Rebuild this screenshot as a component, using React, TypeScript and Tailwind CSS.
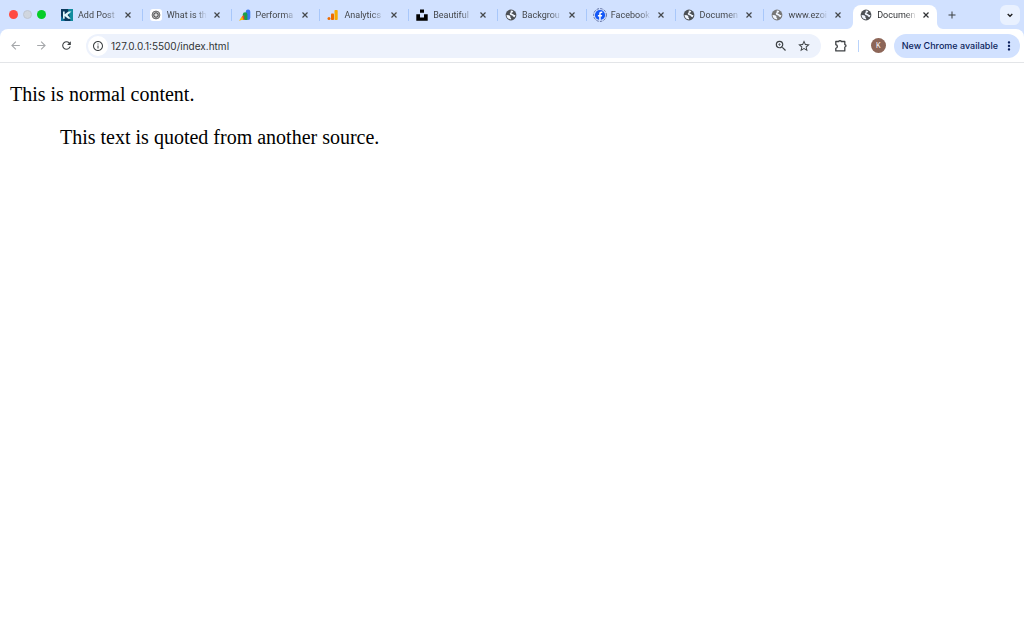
import type { ReactNode } from "react";
import {
  MdArrowBack,
  MdArrowForward,
  MdRefresh,
  MdInfoOutline,
  MdZoomIn,
  MdStarOutline,
  MdAdd,
  MdMoreVert,
} from "react-icons/md";

function Kinsta() {
  return (
    <svg viewBox="0 0 12 12" className="size-3">
      <rect width="12" height="12" fill="#0b3a5e" />
      <path d="M7 0h5v12H9.500z" fill="#128c9e" />
      <path d="M0 7l4 5H0z" fill="#1276a0" />
      <path d="M2 2.500h1.700v2.800L7.500 2.500h3L6.500 6l3.200 3.700H7.200L3.700 6.900V9.700H2z" fill="#dff6fb" />
    </svg>
  );
}

function Knot() {
  return (
    <svg viewBox="0 0 12 12" className="size-3">
      <rect width="12" height="12" rx="3" fill="#fff" />
      <circle cx="6" cy="6" r="3.900" fill="#c4c4c4" stroke="#5a5a5a" strokeWidth="0.900" />
      <path d="M6 3.600l2.100 1.200v2.400L6 8.400 3.900 7.200V4.800z" fill="none" stroke="#4a4a4a" strokeWidth="0.900" />
      <circle cx="6" cy="6" r="0.800" fill="#fff" />
    </svg>
  );
}

function Performance() {
  return (
    <svg viewBox="0 0 12 12" className="size-3">
      <rect x="6.800" y="0.500" width="4.500" height="10.500" rx="2.200" fill="#3b78f0" />
      <path d="M3.800 5.500a2.300 2.300 0 0 1 4.600 0V11H3.800z" fill="#1b9e4b" />
      <path d="M0 11.800L3.500 6.500l2 4.500H2.500z" fill="#fbbc04" />
      <path d="M3.200 7.500l2-1.500V11H4.500z" fill="#ea4335" />
    </svg>
  );
}

function Analytics() {
  return (
    <svg viewBox="0 0 12 12" className="size-3">
      <rect x="7.500" y="1" width="3.200" height="10" rx="0.800" fill="#f9ab00" />
      <rect x="4" y="4.500" width="3" height="6.500" rx="0.800" fill="#ee6c00" />
      <circle cx="2" cy="9.600" r="1.500" fill="#ee6c00" />
    </svg>
  );
}

function Unsplash() {
  return (
    <svg viewBox="0 0 12 12" className="size-3">
      <path d="M4 0.500h4v3.300H4zM0.300 5.300H4V8.500h4V5.300h3.700v6.400H0.300z" fill="#000" />
    </svg>
  );
}

function Facebook() {
  return (
    <svg viewBox="0 0 14 14" className="-m-px size-3.5">
      <circle cx="7" cy="7" r="6.400" fill="none" stroke="#44538a" strokeWidth="0.800" strokeDasharray="2.500 1.200" />
      <circle cx="7" cy="7" r="5.100" fill="#1558f6" />
      <path d="M6.200 12V8.400H4.900V6.900h1.300V5.800c0-1.500.8-2.200 2-2.200h1.100v1.400h-.8c-.6 0-.8.300-.8.900v1h1.500l-.3 1.500H7.700V12z" fill="#fff" />
    </svg>
  );
}

function Globe({ muted = false }: { muted?: boolean }) {
  return (
    <svg viewBox="0 0 12 12" className={muted ? "size-3 text-[#777777]" : "size-3 text-[#4d5156]"}>
      <circle cx="6" cy="6" r="5.400" fill="currentColor" />
      <path
        fill="#f1f6ff"
        d="M5.800 1.600c.9-.1 1.700.1 2.400.5l-.3 1.100-1.300.5.100 1.100 1.500.3.700 1 1.500-.2c-.1.900-.5 1.700-1 2.300L8 7.600l-.6-1.200-1.900-.5-.8-1.300.9-1z"
      />
      <path fill="#f1f6ff" d="M1.600 6l2.600.3 1.300 1.100-.3 1.100.9.500v1.400C3.600 10.400 1.500 8.500 1.600 6z" />
    </svg>
  );
}

function Cross() {
  return (
    <svg viewBox="0 0 8 8" className="size-2" fill="none" stroke="currentColor" strokeWidth="1.200">
      <path d="M1.500 1.500l5 5M6.500 1.500l-5 5" />
    </svg>
  );
}

function Puzzle() {
  return (
    <svg viewBox="0 0 14 14" className="size-3.5" fill="none" stroke="#3f4245" strokeWidth="1.300" strokeLinejoin="round">
      <path d="M1.800 2.500h2.900c.3-1.300 2.300-1.300 2.600 0h3.500v3.100c1.600.2 1.600 2.300 0 2.500v3.800h-9V9.300c2.100-.5 2.100-3.100 0-3.600z" />
    </svg>
  );
}

type TabInfo = { title: string; icon: ReactNode };

const tabs: TabInfo[] = [
  { title: "Add Post", icon: <Kinsta /> },
  { title: "What is th", icon: <Knot /> },
  { title: "Performa", icon: <Performance /> },
  { title: "Analytics", icon: <Analytics /> },
  { title: "Beautiful", icon: <Unsplash /> },
  { title: "Backgrou", icon: <Globe /> },
  { title: "Facebook", icon: <Facebook /> },
  { title: "Documen", icon: <Globe /> },
  { title: "www.ezoi", icon: <Globe muted /> },
  { title: "Documen", icon: <Globe /> },
];

function Flare({ side }: { side: "left" | "right" }) {
  return (
    <svg
      viewBox="0 0 6 6"
      aria-hidden="true"
      className={side === "left" ? "absolute bottom-0 -left-1.5 size-1.5" : "absolute bottom-0 -right-1.5 size-1.5"}
    >
      <path d={side === "left" ? "M6 0v6H0a6 6 0 0 0 6-6z" : "M0 0v6h6a6 6 0 0 1-6-6z"} fill="#fff" />
    </svg>
  );
}

function Tab({ tab, active, divider }: { tab: TabInfo; active: boolean; divider: boolean }) {
  return (
    <li className="flex min-w-0 flex-1 basis-0 items-end">
      <div
        className={
          active
            ? "relative mr-[5px] flex h-6 min-w-0 flex-1 items-center rounded-t-lg bg-white pb-1 pl-[7px] text-[#303235]"
            : "flex h-6 min-w-0 flex-1 items-center pb-1 pl-[7px] text-[#44474b]"
        }
      >
        {active && <Flare side="left" />}
        <button type="button" className="flex min-w-0 flex-1 items-center gap-[5px] text-left">
          <span className="shrink-0">{tab.icon}</span>
          <span className="min-w-0 flex-1 overflow-hidden font-['Roboto','Liberation_Sans',sans-serif] text-[9px] leading-3 whitespace-nowrap [mask-image:linear-gradient(to_right,black_28px,transparent_40px)]">
            {tab.title}
          </span>
        </button>
        <button
          type="button"
          aria-label={`Close ${tab.title}`}
          className={
            active
              ? "mr-[5px] flex size-3 shrink-0 items-center justify-center"
              : "mr-2 ml-0.5 flex size-3 shrink-0 items-center justify-center"
          }
        >
          <Cross />
        </button>
        {!active && <span className={divider ? "h-3 w-px bg-[#a8c7fa]" : "w-px"} />}
        {active && <Flare side="right" />}
      </div>
    </li>
  );
}

export default function App() {
  return (
    <div className="min-h-screen bg-white font-['Inter','Liberation_Sans',sans-serif]">
      <header className="bg-[#d1e1ff]">
        <div className="flex h-[29px] items-end">
          <div className="flex h-[29px] w-[54px] shrink-0 items-center gap-[5px] pl-[9px]">
            <span className="size-[9px] rounded-full bg-[#ff4b42]" />
            <span className="size-[9px] rounded-full border border-[#bfc6d2] bg-[#d0d6df]" />
            <span className="size-[9px] rounded-full bg-[#05cd27]" />
          </div>
          <ul className="flex min-w-0 flex-1">
            {tabs.map((tab, i) => (
              <Tab key={i} tab={tab} active={i === tabs.length - 1} divider={i < tabs.length - 2} />
            ))}
          </ul>
          <div className="flex h-[29px] w-[82px] shrink-0 items-center justify-between pr-1 pl-1">
            <button type="button" aria-label="New tab" className="flex items-center justify-center text-[#3c4043]">
              <MdAdd className="size-3" />
            </button>
            <button
              type="button"
              aria-label="Search tabs"
              className="flex size-5 items-center justify-center rounded-md bg-[#e9f1ff] text-[#1f1f1f]"
            >
              <svg viewBox="0 0 8 8" className="size-2" fill="none" stroke="currentColor" strokeWidth="1.400">
                <path d="M1.700 2.900L4 5.200l2.300-2.300" />
              </svg>
            </button>
          </div>
        </div>

        <div className="flex h-[34px] items-center rounded-t-lg border-b border-[#e3e5e8] bg-white pr-1 pl-[9px] text-[#3c4043]">
          <button type="button" aria-label="Back" className="flex w-[26px] text-[#a5a7aa]">
            <MdArrowBack className="size-[13px]" />
          </button>
          <button type="button" aria-label="Forward" className="flex w-[25px] text-[#a5a7aa]">
            <MdArrowForward className="size-[13px]" />
          </button>
          <button type="button" aria-label="Reload" className="flex w-[26px]">
            <MdRefresh className="size-[13px]" />
          </button>
          <div className="flex h-6 min-w-0 flex-1 items-center rounded-full bg-[#edf2fc] pr-[10px] pl-[2px]">
            <button
              type="button"
              aria-label="View site information"
              className="flex size-5 shrink-0 items-center justify-center rounded-full bg-white"
            >
              <MdInfoOutline className="size-3" />
            </button>
            <input
              type="text"
              aria-label="Address"
              defaultValue="127.0.0.1:5500/index.html"
              className="ml-[3px] min-w-0 flex-1 bg-transparent text-[10px] leading-4 text-[#303235] outline-none"
            />
            <button type="button" aria-label="Zoom" className="mr-[9px] flex">
              <MdZoomIn className="size-[14px]" />
            </button>
            <button type="button" aria-label="Bookmark this tab" className="flex">
              <MdStarOutline className="size-[14px]" />
            </button>
          </div>
          <button type="button" aria-label="Extensions" className="ml-[13px] flex">
            <Puzzle />
          </button>
          <span className="ml-[10px] h-3 w-px bg-[#b9d3fb]" />
          <button
            type="button"
            aria-label="Profile"
            className="ml-3 flex size-[15px] items-center justify-center rounded-full bg-[#8d6658] text-[7px] leading-none text-white"
          >
            K
          </button>
          <button
            type="button"
            className="ml-2 flex h-6 items-center gap-1 rounded-full bg-[#d1e1ff] pr-1 pl-2 text-[9px] font-medium whitespace-nowrap text-[#0b1f5c]"
          >
            New Chrome available
            <MdMoreVert className="size-[14px]" />
          </button>
        </div>
      </header>

      <main className="flex flex-col gap-5 px-[10px] py-5 font-['Liberation_Serif',serif] text-[20px] leading-[23px] text-black">
        <p>This is normal content.</p>
        <blockquote className="mx-[50px]">This text is quoted from another source.</blockquote>
      </main>
    </div>
  );
}
